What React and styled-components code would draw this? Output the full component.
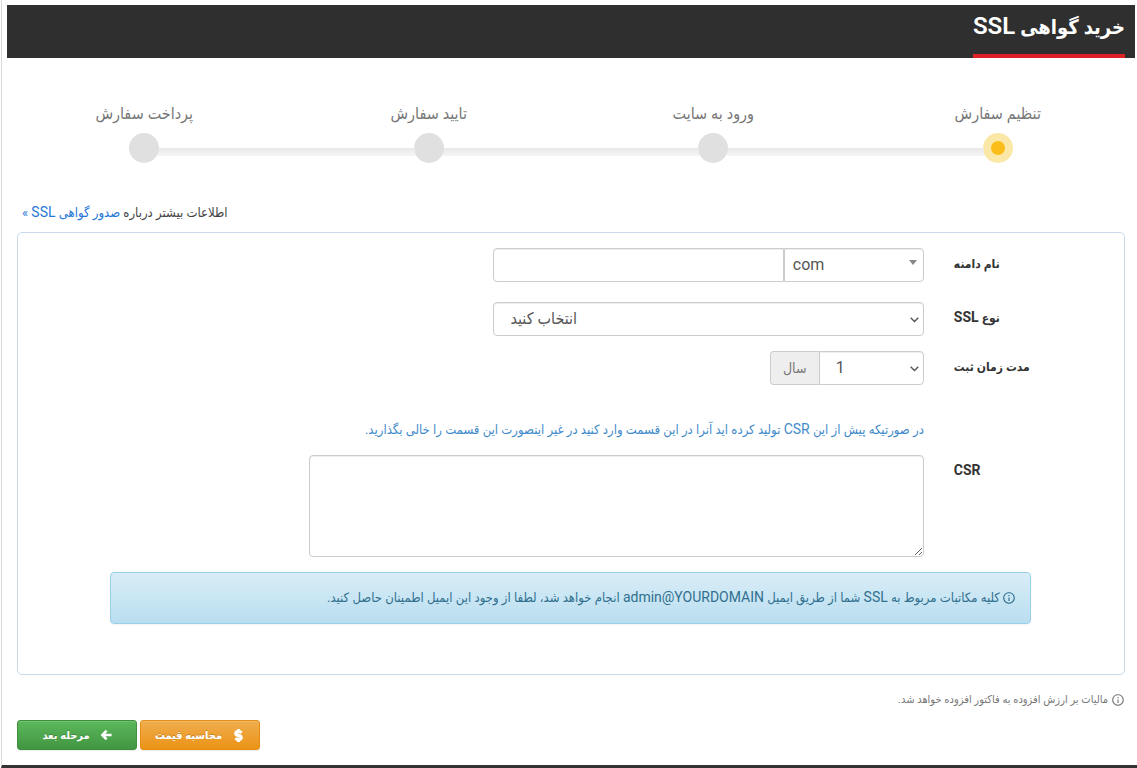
import { useState } from 'react'
import styled, { createGlobalStyle } from 'styled-components'
import { MdInfoOutline } from 'react-icons/md'
import { FaDollarSign } from 'react-icons/fa'

const GlobalStyle = createGlobalStyle`
  * {
    box-sizing: border-box;
  }

  body {
    margin: 0;
    background: #fff;
    color: #444;
    font-family: Roboto, 'DejaVu Sans Condensed', 'DejaVu Sans', sans-serif;
    font-size: 13px;
    line-height: 20px;
    overflow-x: hidden;
  }

  input, select, textarea, button {
    font-family: inherit;
  }
`

const Page = styled.div`
  direction: rtl;
  margin-left: 1px;
  padding-top: 5px;
  border-left: 1px solid #d8d8d8;
  border-bottom: 3px solid #333;
`

const Header = styled.header`
  display: flex;
  margin: 0 2px 0 5px;
  padding: 0 10px;
  background: #2f2f2f;
`

/* latin words are set a little larger than the persian around them */
const Latin = styled.span`
  font-size: ${props => props.$size || 14}px;
  line-height: 1;
`

const Title = styled.h1`
  margin: 0;
  padding: 4px 0 9px;
  border-bottom: 4px solid #de1f26;
  color: #fff;
  font-size: 20px;
  font-weight: 600;
  line-height: 36px;
`

const Content = styled.main`
  padding: 44px 12px 15px 15px;
`

const Steps = styled.ol`
  display: grid;
  grid-template-columns: repeat(4, 1fr);
  list-style: none;
  margin: 0 -15px 40px;
  padding: 0;
`

const Step = styled.li`
  position: relative;
  display: flex;
  flex-direction: column;
  align-items: center;
  gap: 7px;
  color: #777;
  font-size: 16px;
  line-height: 24px;

  /* line to the previous dot */
  & + &::before {
    content: '';
    position: absolute;
    right: calc(14px - 50%);
    bottom: 7px;
    width: calc(100% - 28px);
    height: 8px;
    background: linear-gradient(#e9e9e9, #f5f5f5);
  }
`

const Dot = styled.span`
  position: relative;
  display: flex;
  align-items: center;
  justify-content: center;
  width: 30px;
  height: 30px;
  border-radius: 50%;
  background: ${props => props.$active ? '#fbe8a6' : '#e0e0e0'};

  &::after {
    content: '';
    width: 14px;
    height: 14px;
    border-radius: 50%;
    background: ${props => props.$active ? '#fbbd19' : 'transparent'};
  }
`

const MoreInfo = styled.p`
  margin: 0;
  padding: 0 5px 9px;
  text-align: left;
`

const MoreLink = styled.a`
  color: #2478d8;
  text-decoration: none;
`

const Panel = styled.section`
  padding: 15px 1px 50px 0;
  border: 1px solid #c8dae9;
  border-radius: 5px;
`

const Row = styled.div`
  display: grid;
  grid-template-columns: repeat(12, 1fr);
  margin-bottom: ${props => props.$gap}px;
`

const Label = styled.label`
  grid-column: span 2;
  justify-self: end;
  padding: 6px 0 0 15px;
  color: #333;
  font-size: 12px;
  font-weight: bold;
`

const Field = styled.div`
  grid-column: 3 / span ${props => props.$span};
  display: flex;
  padding: 0 15px;
`

const control = `
  height: 34px;
  min-width: 0;
  border: 1px solid #ccc;
  border-radius: 4px;
  background-color: #fff;
  box-shadow: inset 0 1px 1px rgba(0, 0, 0, 0.07);
  color: #555;
`

const DomainInput = styled.input`
  ${control}
  flex: 1;
  border-radius: 4px 0 0 4px;
  padding: 6px 12px;
  font-size: 14px;
`

const SelectBox = styled.div`
  position: relative;
  display: flex;
  flex: ${props => props.$width ? `0 0 ${props.$width}px` : 1};
`

const Arrow = styled.svg`
  position: absolute;
  top: ${props => props.$solid ? 12 : 15}px;
  right: ${props => props.$solid ? 7 : 5}px;
  pointer-events: none;
`

const Select = styled.select`
  ${control}
  appearance: none;
  direction: ltr;
  flex: 1;
  border-radius: ${props => props.$grouped ? '0 4px 4px 0' : '4px'};
  padding: 0 16px 2px ${props => props.$indent}px;
  font-size: 16px;
`

const Addon = styled.span`
  width: 49px;
  padding: 6px 0;
  border: 1px solid #ccc;
  border-right: 0;
  border-radius: 4px 0 0 4px;
  background: #eee;
  color: #777;
  font-size: 14px;
  text-align: center;
`

const Hint = styled.p`
  grid-column: 3 / -1;
  margin: 0;
  padding: 0 15px;
  color: #428bca;
`

const CsrArea = styled.textarea`
  ${control}
  flex: 1;
  height: 102px;
  padding: 6px 12px;
  resize: vertical;
  direction: ltr;
`

const Alert = styled.div`
  grid-column: 2 / span 10;
  display: flex;
  align-items: center;
  gap: 2px;
  padding: 15px 14px;
  border: 1px solid #9acfea;
  border-radius: 4px;
  background: linear-gradient(#d9edf7, #b9def0);
  box-shadow: 0 1px 2px rgba(0, 0, 0, 0.05);
  color: #31708f;
`

const TaxNote = styled.p`
  display: flex;
  align-items: center;
  gap: 3px;
  margin: 15px 0 10px;
  color: #777;
  font-size: 11px;
`

const Actions = styled.div`
  display: flex;
  justify-content: flex-end;
  gap: 3px;
`

const Button = styled.button`
  display: flex;
  align-items: center;
  justify-content: center;
  gap: 10px;
  width: 120px;
  height: 30px;
  padding: 0;
  border: 1px solid ${props => props.$green ? '#3e8f3e' : '#e38d13'};
  border-radius: 3px;
  background: ${props => props.$green
    ? 'linear-gradient(#5cb85c, #419641)'
    : 'linear-gradient(#f0ad4e, #eb9316)'};
  box-shadow: inset 0 1px 0 rgba(255, 255, 255, 0.15), 0 1px 1px rgba(0, 0, 0, 0.08);
  color: #fff;
  font-size: 11px;
  font-weight: bold;
  text-shadow: 0 -1px 0 rgba(0, 0, 0, 0.2);
  cursor: pointer;
`

const Chevron = () => (
  <Arrow width="9" height="6" viewBox="0 0 9 6" fill="none" stroke="#555" strokeWidth="1.4">
    <path d="M0.7 0.8 L4.5 4.6 L8.3 0.8" />
  </Arrow>
)

const Caret = () => (
  <Arrow $solid width="8" height="5" viewBox="0 0 8 5" fill="#888">
    <path d="M0 0 H8 L4 5 Z" />
  </Arrow>
)

const LeftArrow = () => (
  <svg width="12" height="12" viewBox="0 0 12 12" fill="none" stroke="#fff" strokeWidth="2.6">
    <path d="M6.6 1.6 L2.4 6 L6.6 10.4 M2.8 6 H11.6" />
  </svg>
)

const steps = ['تنظیم سفارش', 'ورود به سایت', 'تایید سفارش', 'پرداخت سفارش']

const App = () => {

  const [domain, setDomain] = useState('')
  const [csr, setCsr] = useState('')

  return (
    <>
      <GlobalStyle />
      <Page lang="fa">
        <Header>
          <Title>خرید گواهی <Latin $size={24}>SSL</Latin></Title>
        </Header>

        <Content>
          <Steps>
            {steps.map((step, index) => (
              <Step key={step}>
                {step}
                <Dot $active={index === 0} />
              </Step>
            ))}
          </Steps>

          <MoreInfo>
            اطلاعات بیشتر درباره <MoreLink href="#ssl">صدور گواهی <Latin>SSL</Latin> »</MoreLink>
          </MoreInfo>

          <Panel>
            <Row $gap={20}>
              <Label htmlFor="domain">نام دامنه</Label>
              <Field $span={5}>
                <SelectBox $width={140}>
                  <Select aria-label="پسوند دامنه" $grouped $indent={8}>
                    <option>com</option>
                  </Select>
                  <Caret />
                </SelectBox>
                <DomainInput id="domain" value={domain} onChange={e => setDomain(e.target.value)} />
              </Field>
            </Row>

            <Row $gap={15}>
              <Label htmlFor="type">نوع <Latin>SSL</Latin></Label>
              <Field $span={5}>
                <SelectBox>
                  <Select id="type" $indent={16}>
                    <option>انتخاب کنید</option>
                  </Select>
                  <Chevron />
                </SelectBox>
              </Field>
            </Row>

            <Row $gap={35}>
              <Label htmlFor="years">مدت زمان ثبت</Label>
              <Field $span={2}>
                <SelectBox>
                  <Select id="years" $grouped $indent={16}>
                    <option>1</option>
                  </Select>
                  <Chevron />
                </SelectBox>
                <Addon>سال</Addon>
              </Field>
            </Row>

            <Row $gap={15}>
              <Hint>
                در صورتیکه پیش از این <Latin>CSR</Latin> تولید کرده اید آنرا در این قسمت وارد کنید در غیر اینصورت این قسمت را خالی بگذارید.
              </Hint>
            </Row>

            <Row $gap={15}>
              <Label htmlFor="csr"><Latin>CSR</Latin></Label>
              <Field $span={7}>
                <CsrArea id="csr" value={csr} onChange={e => setCsr(e.target.value)} />
              </Field>
            </Row>

            <Row $gap={0}>
              <Alert>
                <MdInfoOutline size={14} />
                <span>
                  کلیه مکاتبات مربوط به <Latin>SSL</Latin> شما از طریق ایمیل <Latin>admin@YOURDOMAIN</Latin> انجام خواهد شد، لطفا از وجود این ایمیل اطمینان حاصل کنید.
                </span>
              </Alert>
            </Row>
          </Panel>

          <TaxNote>
            <MdInfoOutline size={14} />
            مالیات بر ارزش افزوده به فاکتور افزوده خواهد شد.
          </TaxNote>

          <Actions>
            <Button type="button">
              <FaDollarSign size={13} stroke="#fff" strokeWidth="50" />
              محاسبه قیمت
            </Button>
            <Button type="submit" $green>
              <LeftArrow />
              مرحله بعد
            </Button>
          </Actions>
        </Content>
      </Page>
    </>
  )
}

export default App
